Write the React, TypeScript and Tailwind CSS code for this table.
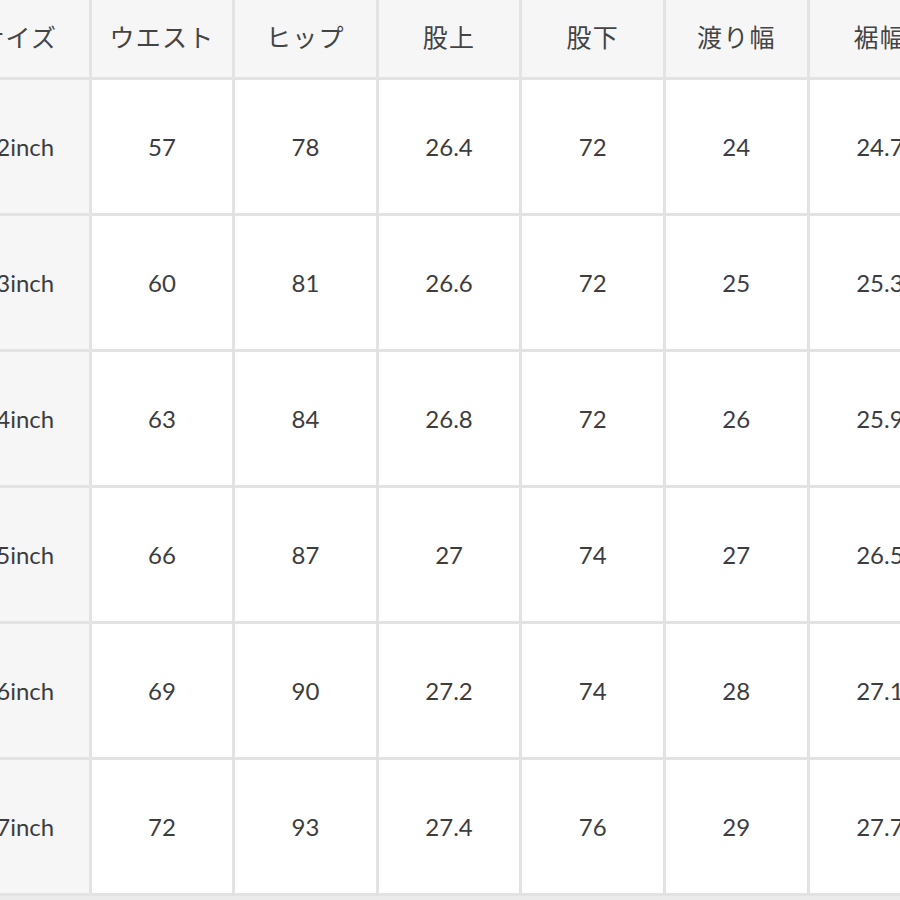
import React from "react";

const headers = ["サイズ", "ウエスト", "ヒップ", "股上", "股下", "渡り幅", "裾幅"];
const rows = [
  ["22inch", "57", "78", "26.4", "72", "24", "24.7"],
  ["23inch", "60", "81", "26.6", "72", "25", "25.3"],
  ["24inch", "63", "84", "26.8", "72", "26", "25.9"],
  ["25inch", "66", "87", "27", "74", "27", "26.5"],
  ["26inch", "69", "90", "27.2", "74", "28", "27.1"],
  ["27inch", "72", "93", "27.4", "76", "29", "27.7"],
];

export default function App() {
  return (
    <div
      className="w-[900px] h-[900px] overflow-hidden bg-[#ebebeb]"
      style={{ fontFamily: 'Lato, "Noto Sans CJK JP", sans-serif' }}
    >
      <div className="ml-[-52px] w-[1002px] grid grid-cols-[repeat(7,140.6px)] grid-rows-[77px_repeat(6,133px)] gap-[3px] bg-[#e3e3e3] pb-[3px] text-[#3d3d3d] text-[24px]">
        {headers.map((h) => (
          <div
            key={h}
            className="bg-[#f6f6f6] flex items-center justify-center pb-[3px] text-[25px] tracking-[0.05em] text-[#444444]"
            style={{ fontFamily: '"Noto Sans CJK JP", sans-serif' }}
          >
            {h}
          </div>
        ))}
        {rows.map((r) =>
          r.map((c, i) => (
            <div
              key={r[0] + i}
              className={
                (i === 0 ? "bg-[#f6f6f6]" : "bg-white") +
                " flex items-center justify-center"
              }
            >
              {c}
            </div>
          ))
        )}
      </div>
    </div>
  );
}
